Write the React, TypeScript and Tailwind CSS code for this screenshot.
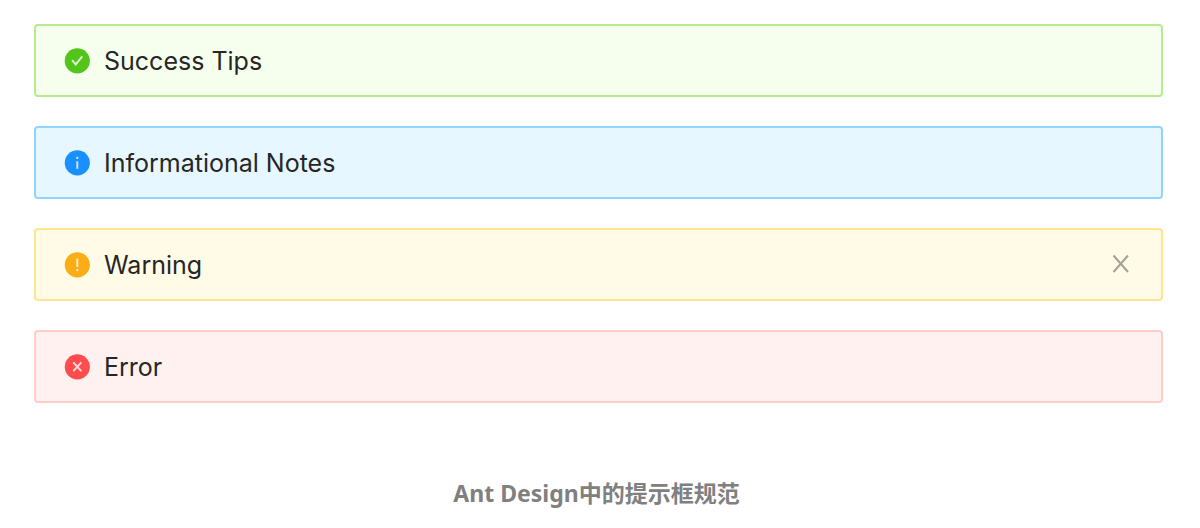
import { useState } from "react";
import type { ReactNode } from "react";
import clsx from "clsx";

type AlertType = "success" | "info" | "warning" | "error";

const boxStyles: Record<AlertType, string> = {
  success: "bg-[#f6ffed] border-[#b7eb8f]",
  info: "bg-[#e6f7ff] border-[#91d5ff]",
  warning: "bg-[#fffbe6] border-[#ffe58f]",
  error: "bg-[#fff1f0] border-[#ffccc7]",
};

const iconStyles: Record<AlertType, string> = {
  success: "text-[#52c41a]",
  info: "text-[#1890ff]",
  warning: "text-[#faad14]",
  error: "text-[#ff4d4f]",
};

const glyphs: Record<AlertType, ReactNode> = {
  success: <path d="M7.8 12.4l3.6 4.2 6.6-8" />,
  info: (
    <>
      <path d="M13 11.5v7.5" />
      <path d="M13 7v2.2" />
    </>
  ),
  warning: (
    <>
      <path d="M13 6.8v8.4" />
      <path d="M13 17.2v2.2" />
    </>
  ),
  error: <path d="M9 8.6l8 8.8M17 8.6l-8 8.8" />,
};

function AlertIcon({ type }: { type: AlertType }) {
  return (
    <svg
      viewBox="0 0 26 26"
      className={clsx("size-[26px] shrink-0", iconStyles[type])}
      aria-hidden="true"
    >
      <circle cx="13.3" cy="12.8" r="12.6" fill="currentColor" />
      <g
        fill="none"
        stroke="#fff"
        strokeWidth="1.9"
        strokeOpacity="0.8"
        transform="translate(0.3 -0.2)"
      >
        {glyphs[type]}
      </g>
    </svg>
  );
}

interface AlertProps {
  type: AlertType;
  message: string;
  closable?: boolean;
}

function Alert({ type, message, closable }: AlertProps) {
  const [open, setOpen] = useState(true);

  if (!open) return null;

  return (
    <div
      role="alert"
      className={clsx(
        "flex items-center rounded border-2 px-7 py-4 text-[25px] leading-[35px] text-[#262626]",
        boxStyles[type]
      )}
    >
      <AlertIcon type={type} />
      <span className="ml-3.5 flex-1 pt-0.5">{message}</span>
      {closable && (
        <button
          type="button"
          aria-label="Close"
          onClick={() => setOpen(false)}
          className="cursor-pointer text-[#a3a196] hover:text-[#595959]"
        >
          <svg
            viewBox="0 0 24 24"
            className="size-6"
            fill="none"
            stroke="currentColor"
            strokeWidth="2"
          >
            <path d="M4.5 2.5l14.5 16.5M19 2.5l-14.5 16.5" />
          </svg>
        </button>
      )}
    </div>
  );
}

export default function App() {
  return (
    <main className="bg-white pt-6 pr-[37px] pb-4 pl-[34px] font-['Inter','Noto_Sans_CJK_SC',sans-serif]">
      <div className="flex flex-col gap-[29px]">
        <Alert type="success" message="Success Tips" />
        <Alert type="info" message="Informational Notes" />
        <Alert type="warning" message="Warning" closable />
        <Alert type="error" message="Error" />
      </div>
      <p className="mt-[72px] pr-1 text-center font-['Noto_Sans','Noto_Sans_CJK_SC',sans-serif] text-[23px] leading-9 font-bold text-[#7f8080]">
        Ant Design中的提示框规范
      </p>
    </main>
  );
}
